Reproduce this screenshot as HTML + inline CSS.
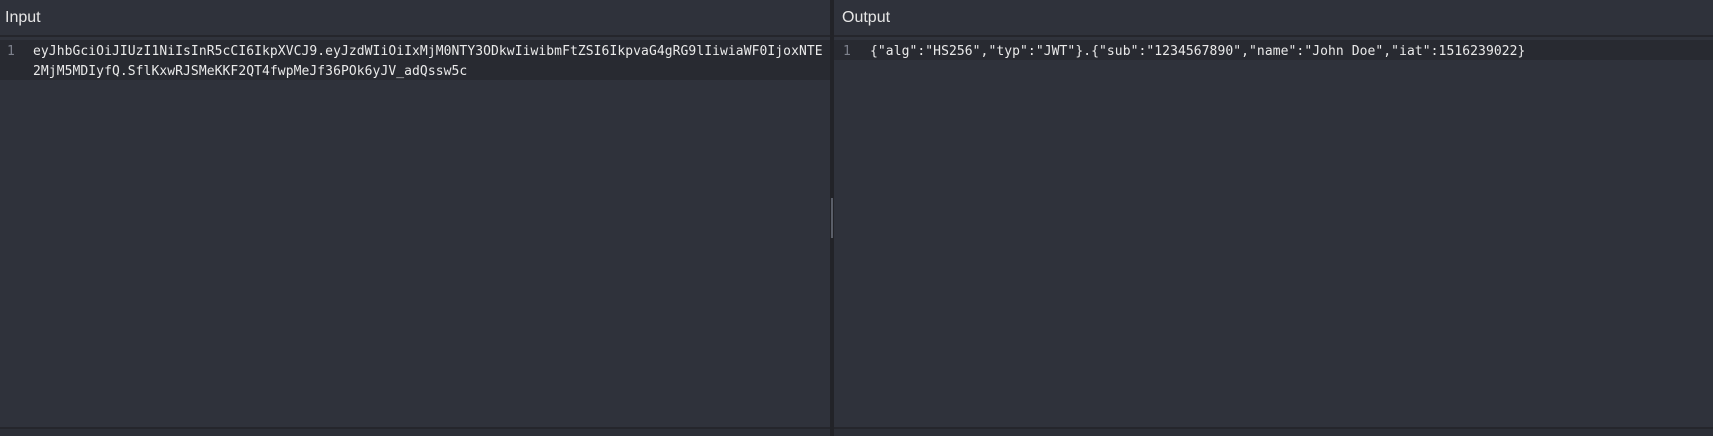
<!DOCTYPE html>
<html><head><meta charset="utf-8"><style>
html,body{margin:0;padding:0;width:1713px;height:436px;overflow:hidden;background:#2f323b;font-family:"Liberation Sans",sans-serif}
.pane{position:absolute;top:0;height:436px;background:#2f323b}
.hdr{position:absolute;left:0;right:0;top:1px;height:35px;color:#e6e6e6;font-size:16px;line-height:34px;padding-left:5px}
.sep{position:absolute;left:0;right:0;top:35px;height:2px;background:#25262c}
.strip{position:absolute;left:0;right:0;top:37px;height:3px;background:#30333c}
.act{position:absolute;left:0;right:0;top:40px;background:#282a31}
.ln{position:absolute;left:7px;top:42px;color:#7d818c;font-family:"DejaVu Sans Mono",monospace;font-size:13px;line-height:20px}
.code{position:absolute;top:42px;color:#eaeaea;font-family:"DejaVu Sans Mono",monospace;font-size:13px;letter-spacing:0.07px;line-height:20px;white-space:pre}
.bot{position:absolute;left:0;right:0;top:427px;height:2px;background:#25262c}
.bot2{position:absolute;left:0;right:0;top:429px;height:7px;background:#2c2f37}
</style></head><body>
<div class="pane" style="left:0;width:830px">
<div class="hdr">Input</div><div class="sep"></div><div class="strip"></div>
<div class="act" style="height:40px"></div>
<div class="ln">1</div>
<div class="code" style="left:33px">eyJhbGciOiJIUzI1NiIsInR5cCI6IkpXVCJ9.eyJzdWIiOiIxMjM0NTY3ODkwIiwibmFtZSI6IkpvaG4gRG9lIiwiaWF0IjoxNTE
2MjM5MDIyfQ.SflKxwRJSMeKKF2QT4fwpMeJf36POk6yJV_adQssw5c</div>
<div class="bot"></div><div class="bot2"></div>
</div>
<div style="position:absolute;left:830px;top:0;width:4px;height:436px;background:#222328"></div>
<div style="position:absolute;left:831px;top:198px;width:2px;height:40px;background:#5a5e68"></div>
<div class="pane" style="left:834px;width:879px">
<div class="hdr" style="padding-left:8px">Output</div><div class="sep"></div><div class="strip"></div>
<div class="act" style="height:20px"></div>
<div class="ln" style="left:9px">1</div>
<div class="code" style="left:36px">{"alg":"HS256","typ":"JWT"}.{"sub":"1234567890","name":"John Doe","iat":1516239022}</div>
<div class="bot"></div><div class="bot2"></div>
</div>
</body></html>
